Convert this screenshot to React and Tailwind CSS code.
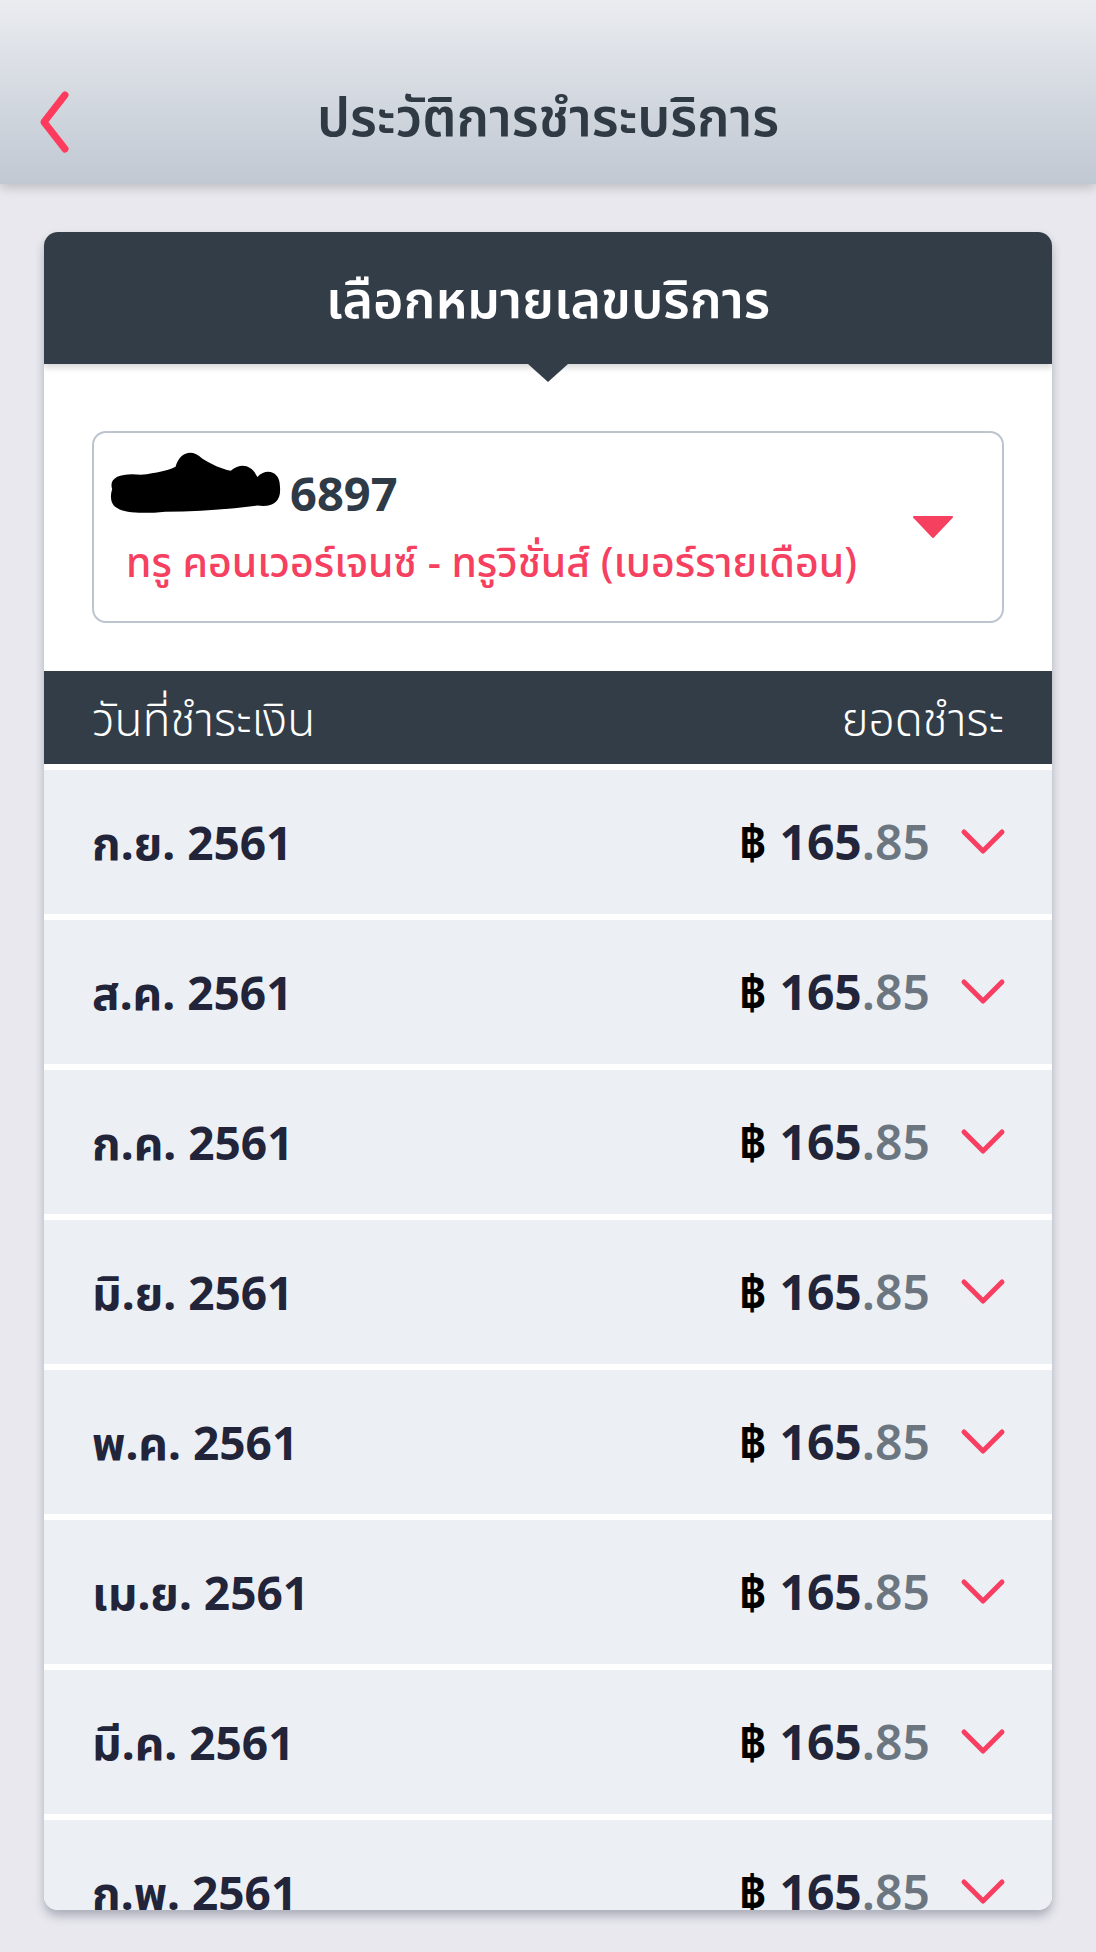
const rows = [
  "ก.ย. 2561",
  "ส.ค. 2561",
  "ก.ค. 2561",
  "มิ.ย. 2561",
  "พ.ค. 2561",
  "เม.ย. 2561",
  "มี.ค. 2561",
  "ก.พ. 2561",
];

const font = { fontFamily: '"Noto Sans", "Noto Sans Thai", sans-serif' };

const BackIcon = () => (
  <svg width="44" height="64" viewBox="0 0 44 64" className="shrink-0">
    <path
      d="M33 5 L12 32 L33 59"
      fill="none"
      stroke="#fe3b5c"
      strokeWidth="7"
      strokeLinecap="round"
      strokeLinejoin="round"
    />
  </svg>
);

const Scribble = () => (
  <svg
    width="184"
    height="72"
    viewBox="0 0 180 66"
    className="absolute left-[-22px] top-[-18px]"
  >
    <path
      d="M8 40 C4 28 18 24 36 26 C52 24 62 22 70 18 C74 4 86 0 96 10 C106 16 114 20 124 22 C134 14 144 16 150 28 C160 18 172 24 172 36 C174 52 166 58 150 56 C120 60 90 62 60 62 C40 64 20 64 12 58 C6 54 6 46 8 40 Z"
      fill="#000"
    />
  </svg>
);

const Row = ({ label }) => (
  <div className="flex h-[144px] shrink-0 items-center justify-between bg-[#ecf0f5] pl-12 pr-[46px] mb-[6px]">
    <span className="text-[46px] leading-none font-bold text-[#22243a]">{label}</span>
    <div className="flex items-center">
      <span className="text-[48px] leading-none font-bold text-[#22243a]">
        <span className="text-black">฿</span> 165
        <span className="font-semibold text-[#6c7680]">.85</span>
      </span>
      <svg width="46" height="30" viewBox="0 0 46 30" className="ml-[30px]">
        <path
          d="M4 5 L23 24 L42 5"
          fill="none"
          stroke="#f83f62"
          strokeWidth="5"
          strokeLinecap="round"
          strokeLinejoin="round"
        />
      </svg>
    </div>
  </div>
);

export default function App() {
  return (
    <div className="min-h-[1952px] w-[1096px] bg-[#e8e8ee]" style={font}>
      <header className="relative flex h-[184px] items-center bg-gradient-to-b from-[#eaecf0] to-[#c0c8d2] pt-[46px] shadow-[0_4px_10px_rgba(0,0,0,0.18)]">
        <div className="absolute left-[32px] top-[90px]">
          <BackIcon />
        </div>
        <h1 className="w-full text-center text-[53px] leading-none font-semibold text-[#2f3a45]">
          ประวัติการชำระบริการ
        </h1>
      </header>

      <div className="mx-[44px] mt-[48px] h-[1678px] overflow-hidden rounded-[14px] bg-white shadow-[0_6px_10px_rgba(60,70,90,0.35)] flex flex-col">
        <div className="relative flex h-[132px] shrink-0 items-center justify-center bg-[#323d47] shadow-[0_4px_6px_rgba(0,0,0,0.15)]">
          <span className="text-[52px] leading-none font-semibold text-white">
            เลือกหมายเลขบริการ
          </span>
          <div className="absolute left-1/2 top-full -translate-x-1/2 h-0 w-0 border-x-[20px] border-t-[18px] border-x-transparent border-t-[#323d47]" />
        </div>

        <div className="px-12 pt-[67px] pb-[48px] shrink-0">
          <div className="flex h-[192px] items-center justify-between rounded-[14px] border-2 border-[#bcc5cf] pl-[32px] pr-[48px]">
            <div className="flex flex-col gap-[10px]">
              <div className="relative pl-[164px] text-[47px] font-bold text-[#2e3a45] leading-[58px]">
                <Scribble />
                6897
              </div>
              <div className="text-[41px] font-medium text-[#f5405f] leading-[58px]">
                ทรู คอนเวอร์เจนซ์ - ทรูวิชั่นส์ (เบอร์รายเดือน)
              </div>
            </div>
            <svg width="42" height="24" viewBox="0 0 42 24">
              <path d="M2 2 L40 2 L21 22 Z" fill="#f5405f" stroke="#f5405f" strokeWidth="2" strokeLinejoin="round" />
            </svg>
          </div>
        </div>

        <div className="flex h-[93px] shrink-0 items-center justify-between bg-[#323d47] px-12">
          <span className="text-[46px] leading-none font-light text-white">วันที่ชำระเงิน</span>
          <span className="text-[46px] leading-none font-light text-white">ยอดชำระ</span>
        </div>

        <div className="flex flex-col pt-[6px]">
          {rows.map((r) => (
            <Row key={r} label={r} />
          ))}
        </div>
      </div>
    </div>
  );
}
